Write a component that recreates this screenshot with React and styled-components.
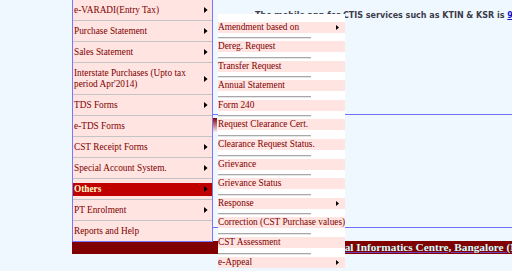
import React from "react";
import styled, { createGlobalStyle } from "styled-components";

const GlobalStyle = createGlobalStyle`
  html, body {
    margin: 0;
    padding: 0;
    background: #f0f8ff;
    overflow: hidden;
  }
  body {
    font-family: "Liberation Serif", "Times New Roman", serif;
  }
`;

const Page = styled.div`
  position: relative;
  width: 512px;
  height: 271px;
  overflow: hidden;
  background: #f0f8ff;
`;

const Main = styled.div`
  display: flex;
  padding-left: 72px;
`;

const Nav = styled.ul`
  flex: 0 0 139px;
  margin: 0;
  padding: 0;
  list-style: none;
  background: #ffe4e1;
  border-left: 1px solid #7878ff;
  border-right: 1px solid #7878ff;
  border-bottom: 1px solid #7878ff;
`;

const NavItem = styled.li`
  padding: ${(p) => (p.$active ? "3.5px 0" : "4.5px 0")};
  border-bottom: 1px solid #c4c4c4;
  &:last-child {
    border-bottom: none;
  }
`;

const NavRow = styled.div`
  display: flex;
  align-items: center;
  justify-content: space-between;
  padding: ${(p) => (p.$active ? "1px 4px 1px 1px" : "0 4px 0 1px")};
  background: ${(p) => (p.$active ? "#c00000" : "transparent")};
  color: ${(p) => (p.$active ? "#ffffc8" : "#800000")};
  font-weight: ${(p) => (p.$active ? "bold" : "normal")};
  font-size: 9.3px;
  line-height: 11px;
`;

const Content = styled.div`
  flex: 1;
  min-width: 0;
  display: flex;
  flex-direction: column;
`;

const Header = styled.p`
  margin: 0;
  height: 114px;
  box-sizing: border-box;
  padding: 11px 0 0 42px;
  white-space: nowrap;
  font-family: "DejaVu Sans", Verdana, sans-serif;
  font-weight: bold;
  font-size: 8px;
  line-height: 10px;
  color: #3c3c4c;

  a {
    color: #1010d0;
    text-decoration: underline;
  }
`;

const Box = styled.div`
  height: 112px;
  border-top: 1px solid #7070ff;
  border-bottom: 1px solid #7070ff;
`;

const Marker = styled.div`
  width: 4px;
  height: 15px;
  margin-top: 3px;
  background: linear-gradient(#8b0000, #ffffff);
`;

const Footer = styled.div`
  margin-left: 72px;
  margin-top: -1px;
  height: 13px;
  background: #800000;
  white-space: nowrap;
  overflow: hidden;
  padding-left: 240px;
  font-family: "Liberation Serif", serif;
  font-weight: bold;
  font-size: 11.3px;
  line-height: 13px;
  color: #ccffff;
  text-decoration: underline;
  text-decoration-color: #7040c0;
`;

const Flyout = styled.ul`
  position: absolute;
  left: 218px;
  top: 14px;
  width: 127px;
  margin: 0;
  padding: 7.5px 0 0;
  list-style: none;
  background: #ffffff;
`;

const FlyItem = styled.li`
  display: flex;
  align-items: center;
  justify-content: space-between;
  height: 11px;
  padding-right: 6px;
  background: #ffe4e1;
  color: #800000;
  font-size: 9.3px;
  line-height: 11px;
  white-space: nowrap;
`;

const Rule = styled.li`
  width: 93px;
  height: 0;
  margin: 4.6px 0 2px;
  border-top: 1px solid #a8a8a8;
  border-bottom: 1px solid #e6e6e6;
`;

const Arrow = ({ size = 6 }) => (
  <svg width={size * 0.6} height={size} viewBox="0 0 3 5" style={{ flex: "none" }}>
    <polygon points="0,0 3,2.5 0,5" fill="#000" />
  </svg>
);

const navItems = [
  { label: "e-VARADI(Entry Tax)", sub: true },
  { label: "Purchase Statement", sub: true },
  { label: "Sales Statement", sub: true },
  { label: ["Interstate Purchases (Upto tax", "period Apr'2014)"], sub: true },
  { label: "TDS Forms", sub: true },
  { label: "e-TDS Forms" },
  { label: "CST Receipt Forms", sub: true },
  { label: "Special Account System.", sub: true },
  { label: "Others", sub: true, active: true },
  { label: "PT Enrolment", sub: true },
  { label: "Reports and Help" },
];

const flyItems = [
  { label: "Amendment based on", sub: true },
  { label: "Dereg. Request" },
  { label: "Transfer Request" },
  { label: "Annual Statement" },
  { label: "Form 240" },
  { label: "Request Clearance Cert." },
  { label: "Clearance Request Status." },
  { label: "Grievance" },
  { label: "Grievance Status" },
  { label: "Response", sub: true },
  { label: "Correction (CST Purchase values)" },
  { label: "CST Assessment" },
  { label: "e-Appeal", sub: true },
];

const App = () => {
  return (
    <Page>
      <GlobalStyle />
      <Main>
        <Nav>
          {navItems.map((item, i) => (
            <NavItem key={i} $active={item.active}>
              <NavRow $active={item.active}>
                <span>
                  {Array.isArray(item.label)
                    ? item.label.map((l, j) => (
                        <React.Fragment key={j}>
                          {j > 0 && <br />}
                          {l}
                        </React.Fragment>
                      ))
                    : item.label}
                </span>
                {item.sub && <Arrow />}
              </NavRow>
            </NavItem>
          ))}
        </Nav>
        <Content>
          <Header>
            The mobile app for CTIS services such as KTIN &amp; KSR is{" "}
            <a href="#">9-CTIS Mobile</a>
          </Header>
          <Box>
            <Marker />
          </Box>
        </Content>
      </Main>
      <Footer>National Informatics Centre, Bangalore (NIC)</Footer>
      <Flyout>
        {flyItems.map((item, i) => (
          <React.Fragment key={i}>
            {i > 0 && <Rule />}
            <FlyItem>
              <span>{item.label}</span>
              {item.sub && <Arrow size={5} />}
            </FlyItem>
          </React.Fragment>
        ))}
      </Flyout>
    </Page>
  );
};

export default App;
